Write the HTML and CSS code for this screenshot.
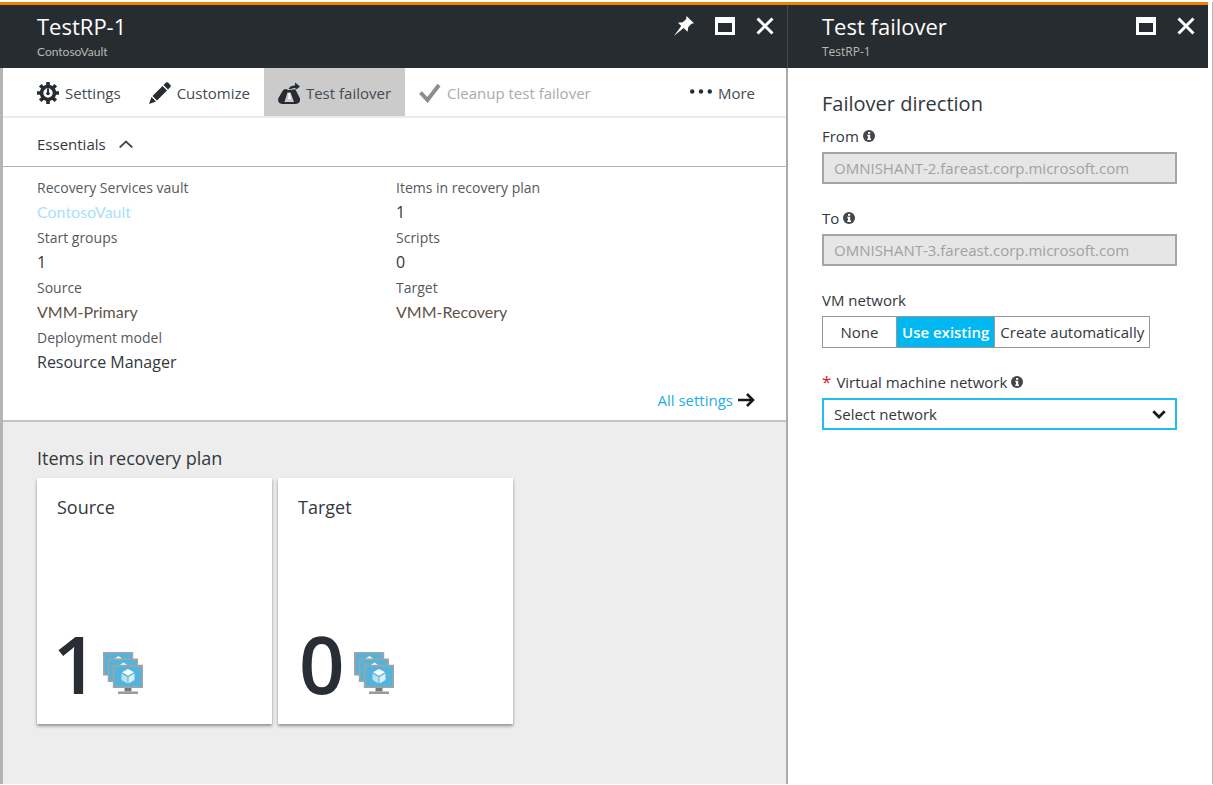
FILE: index.html
```html
<!DOCTYPE html>
<html lang="en">
<head>
<meta charset="utf-8">
<title>TestRP-1 - Test failover</title>
<link rel="stylesheet" href="styles.css">
</head>
<body>
<svg class="defs" aria-hidden="true">
  <symbol id="restore" viewBox="0 0 20 18"><path fill="#fff" fill-rule="evenodd" d="M0 0h20v18H0zM3 6v9h14V6z"/></symbol>
  <symbol id="close" viewBox="0 0 18 18"><path d="M1.500 1.500 16.500 16.500M16.500 1.500 1.500 16.500" stroke="#fff" stroke-width="3" fill="none"/></symbol>
  <symbol id="info" viewBox="0 0 12 12"><circle cx="6" cy="6" r="6" fill="#43474b"/><path d="M5 2h2.200v1.800H5zM4.300 4.800h2.900v3.700h.8V10H4.300V8.500H5V6.200h-.7z" fill="#fff"/></symbol>
  <symbol id="machines" viewBox="0 0 40 42">
    <g fill="#52b3dc" stroke="#a3a3a3" stroke-width="1.600">
      <path d="M.8.800h28.600v22H.8z"/>
      <path d="m11.500 6.800 4-2.800 4 2.800z" fill="#fff" stroke="none"/>
      <path d="M5.600 7.200h28.600v22H5.600z"/>
      <path d="m16.500 13.200 4-2.800 4 2.800z" fill="#fff" stroke="none"/>
      <path d="M10.600 13.600h28.600v21.600H10.600z"/>
    </g>
    <path d="M21.500 36h7v3.500h-7z" fill="#7a7a7a"/><path d="M15 39.500h20V42H15z" fill="#999"/>
    <path d="m25 17 6 3.300-6 3.400-6-3.400z" fill="#fff"/>
    <path d="m18.500 21.500 6 3.400v6.600l-6-3.400z" fill="#b9e1f2"/>
    <path d="m31.500 21.500-6 3.400v6.600l6-3.400z" fill="#d9f0f9"/>
  </symbol>
</svg>
<main class="blades">
  <section class="blade plan">
    <header class="blade-header">
      <div class="blade-titles">
        <h1 class="blade-title">TestRP-1</h1>
        <p class="blade-subtitle alt">ContosoVault</p>
      </div>
      <div class="window-actions">
        <button type="button" aria-label="Pin"><svg width="20" height="20" viewBox="0 0 20 20"><path d="M12.500 0 20 7.200 17.400 7.800 14.200 11.200 13.600 15.800 9.600 12 0 20 7.200 10 4 6.800 8.800 6.200 12.200 3z" fill="#fff"/></svg></button>
        <button type="button" aria-label="Restore"><svg width="20" height="18"><use href="#restore"/></svg></button>
        <button type="button" aria-label="Close"><svg width="18" height="18"><use href="#close"/></svg></button>
      </div>
    </header>
    <nav class="toolbar" aria-label="Commands">
      <button type="button" class="tool">
        <svg width="22" height="22" viewBox="0 0 22 22"><g fill="none" stroke="#272c33"><circle cx="11" cy="11" r="6.500" stroke-width="3.600"/><path d="M11 0v4M11 18v4M0 11h4M18 11h4M3.200 3.200 6 6M16 16l2.800 2.800M18.800 3.200 16 6M6 16l-2.800 2.800" stroke-width="3.600"/><path d="M11 6.500v5" stroke-width="2"/></g><circle cx="11" cy="11.500" r="1.800" fill="#272c33"/></svg>
        Settings</button>
      <button type="button" class="tool">
        <svg width="22" height="22" viewBox="0 0 22 22"><path d="M0 22 2.500 15 7 19.500zM3.500 14 13.500 4 18 8.500 8 18.500zM14.500 3 17 .600Q18-.3 19 .600L21.400 3Q22.300 4 21.400 5L19 7.500z" fill="#272c33"/></svg>
        Customize</button>
      <button type="button" class="tool selected">
        <svg width="22" height="22" viewBox="0 0 22 22"><path d="M4.500 9Q7 5.500 10 8h3.500Q17 6 18.500 9.500L22 16.500Q22.500 22 17 22H4Q-.5 21.500.200 16.500z" fill="#272c33"/><path d="M9.500 10.500h3L16 20H6.500z" fill="#cbcbcb"/><path d="M10.500 11h1.500l.8 6h-2.500z" fill="#fff"/><path d="M10.500 6.500Q13 3 17 3.500V.500L22 4.500 17.500 8V6Q14 5.500 12.500 7.500z" fill="#272c33"/></svg>
        Test failover</button>
      <button type="button" class="tool" disabled>
        <svg width="22" height="20" viewBox="0 0 22 20"><path d="m1.500 9.500 7 7.500L20 2" fill="none" stroke="#8b8e90" stroke-width="4"/></svg>
        Cleanup test failover</button>
      <button type="button" class="tool more">
        <svg width="22" height="22" viewBox="0 0 22 22"><g fill="#272c33"><circle cx="2.200" cy="9.500" r="2.200"/><circle cx="11" cy="9.500" r="2.200"/><circle cx="19.800" cy="9.500" r="2.200"/></g></svg>
        More</button>
    </nav>
    <button type="button" class="essentials-toggle" aria-expanded="true">Essentials
      <svg width="14" height="8" viewBox="0 0 14 8"><path d="m.7 7.500 6.300-6 6.300 6" fill="none" stroke="#44484c" stroke-width="1.800"/></svg>
    </button>
    <div class="essentials">
      <dl class="facts">
        <div><dt>Recovery Services vault</dt><dd class="alt"><a class="vault" href="#vault">ContosoVault</a></dd></div>
        <div><dt>Items in recovery plan</dt><dd>1</dd></div>
        <div><dt>Start groups</dt><dd>1</dd></div>
        <div><dt>Scripts</dt><dd>0</dd></div>
        <div><dt>Source</dt><dd class="alt">VMM-Primary</dd></div>
        <div><dt>Target</dt><dd class="alt">VMM-Recovery</dd></div>
        <div><dt>Deployment model</dt><dd>Resource Manager</dd></div>
      </dl>
      <a class="all-settings" href="#settings">All settings
        <svg width="17" height="14" viewBox="0 0 17 14"><path d="M0 7h15M9 1l6 6-6 6" fill="none" stroke="#171b1f" stroke-width="2.600"/></svg></a>
    </div>
    <section class="items">
      <h2 class="items-title">Items in recovery plan</h2>
      <div class="tiles">
        <article class="tile"><h3>Source</h3><p class="count">1<svg width="40" height="42"><use href="#machines"/></svg></p></article>
        <article class="tile"><h3>Target</h3><p class="count">0<svg width="40" height="42"><use href="#machines"/></svg></p></article>
      </div>
    </section>
  </section>
  <section class="blade failover">
    <header class="blade-header">
      <div class="blade-titles">
        <h1 class="blade-title">Test failover</h1>
        <p class="blade-subtitle">TestRP-1</p>
      </div>
      <div class="window-actions">
        <button type="button" aria-label="Restore"><svg width="20" height="18"><use href="#restore"/></svg></button>
        <button type="button" aria-label="Close"><svg width="18" height="18"><use href="#close"/></svg></button>
      </div>
    </header>
    <form class="form">
      <h2 class="form-title">Failover direction</h2>
      <div class="field">
        <label for="from">From <svg width="12" height="12"><use href="#info"/></svg></label>
        <input class="box" id="from" type="text" value="OMNISHANT-2.fareast.corp.microsoft.com" disabled>
      </div>
      <div class="field">
        <label for="to">To <svg width="12" height="12"><use href="#info"/></svg></label>
        <input class="box" id="to" type="text" value="OMNISHANT-3.fareast.corp.microsoft.com" disabled>
      </div>
      <fieldset class="field">
        <legend>VM network</legend>
        <div class="segments">
          <label><input type="radio" name="network-mode"><span>None</span></label>
          <label><input type="radio" name="network-mode" checked><span>Use existing</span></label>
          <label><input type="radio" name="network-mode"><span>Create automatically</span></label>
        </div>
      </fieldset>
      <div class="field">
        <label for="network"><span class="required">*</span> Virtual machine network <svg width="12" height="12"><use href="#info"/></svg></label>
        <div class="select">
          <select class="box" id="network"><option>Select network</option></select>
          <svg width="14" height="9" viewBox="0 0 14 9"><path d="m1.300 1.300 5.700 5.700 5.700-5.700" fill="none" stroke="#171b1f" stroke-width="2.800"/></svg>
        </div>
      </div>
    </form>
  </section>
</main>
</body>
</html>
```

FILE: styles.css
```css
* { box-sizing: border-box; }
body, h1, h2, h3, p, dl, dd, fieldset { margin: 0; padding: 0; }
body {
  background: #fff;
  color: #33383d;
  font: 15px/24px "Open Sans", "Noto Sans", sans-serif;
}
button, input, select { font: inherit; color: inherit; }
button { border: 0; padding: 0; background: none; cursor: pointer; }
svg { flex: none; display: block; }
h1, h2, h3 { font-weight: 400; }
.defs { position: absolute; width: 0; height: 0; }
.alt { font-family: Lato, "Open Sans", sans-serif; }

.blades {
  display: grid;
  grid-template-columns: 788fr 425fr;
  min-height: 100vh;
  padding: 2px 0 1px;
}
.blade { display: flex; flex-direction: column; min-width: 0; }
.plan { border-left: 3px solid #b4b4b4; border-right: 2px solid #ababab; }
.failover { border-right: 1px solid #b4b4b4; }
.blade-header {
  display: flex;
  justify-content: space-between;
  height: 66px;
  padding: 6px 13px 0 34px;
  background: #272c30;
  border-top: 3px solid #ef8200;
  color: #fff;
}
.plan .blade-header { margin: 0 -2px 0 -3px; padding-left: 37px; padding-right: 14px; box-shadow: inset -1px 0 #45494d; }
.failover .blade-header { margin-right: 4px; }
.blade-title { font-size: 22px; line-height: 30px; }
.blade-subtitle { font-size: 12px; line-height: 22px; color: #b9b9b5; }
.window-actions { display: flex; align-items: center; gap: 21px; height: 30px; }

.toolbar { display: flex; height: 50px; padding: 0 17px 0 20px; border-bottom: 2px solid #ebebeb; }
.tool { display: flex; align-items: center; gap: 6px; padding: 2px 14px 0; color: #444b54; }
.tool.selected { background: #cbcbcb; }
.tool:disabled { color: #a9abad; }
.tool.more { margin-left: auto; }

.essentials-toggle {
  display: flex;
  align-items: center;
  gap: 13px;
  height: 49px;
  padding: 4px 34px 0;
  border-bottom: 1px solid #b4b4b4;
}
.essentials { display: flex; flex-direction: column; padding: 9px 31px 8px 34px; border-bottom: 2px solid #c4c4c4; }
.facts { display: grid; grid-template-columns: 1fr 1fr; row-gap: 2px; }
.facts dt { font-size: 14px; color: #55595d; }
.facts dd { font-size: 16px; }
.facts dd.alt { color: #5e5248; }
.facts .vault { color: #a9e1fa; text-decoration: none; }
.all-settings { display: flex; align-items: center; align-self: flex-end; gap: 5px; margin-top: 14px; color: #1eaee5; text-decoration: none; }

.items { flex: 1; padding: 22px 34px; background: #ededed; }
.items-title { font-size: 18px; line-height: 28px; margin-bottom: 6px; }
.tiles { display: flex; flex-wrap: wrap; gap: 6px; }
.tile {
  display: flex;
  flex-direction: column;
  justify-content: space-between;
  width: 235px;
  height: 246px;
  padding: 16px 20px 19px;
  background: #fff;
  box-shadow: 0 2px 3px #0006;
}
.tile h3 { font-size: 18px; line-height: 26px; }
.count {
  display: flex;
  align-items: baseline;
  gap: 8px;
  font-size: 80px;
  line-height: 84px;
  font-weight: 600;
  font-variant-numeric: proportional-nums;
  color: #292e36;
}

.form { padding: 23px 35px 0 34px; }
.form-title { font-size: 20px; line-height: 26px; margin-bottom: 7px; }
.field { border: 0; margin-bottom: 22px; min-width: 0; }
.field > label, .field > legend { display: flex; align-items: center; gap: 4px; padding: 0; margin-bottom: 4px; }
.required { margin-right: 1px; color: #e81123; font-size: 17px; }
.box {
  display: block;
  width: 100%;
  height: 32px;
  margin: 0;
  padding: 0 11px;
  border: 1px solid #8a8a8a;
  border-radius: 0;
  background: #fff;
}
.box:disabled { background: #e6e6e6; color: #a0a2a4; border-width: 2px; border-color: #a5a5a5; padding: 0 10px; }
.select { display: grid; align-items: center; }
.select > * { grid-area: 1 / 1; }
.select svg { justify-self: end; margin-right: 11px; pointer-events: none; }
.select .box { appearance: none; border: 2px solid #1fbdf0; padding: 0 10px; outline: 0; }
.segments { display: flex; width: fit-content; border: 1px solid #999; }
.segments label { position: relative; display: flex; }
.segments label + label { border-left: 1px solid #999; }
.segments input { position: absolute; inset: 0; margin: 0; opacity: 0; }
.segments span { min-width: 73px; padding: 0 5px; line-height: 30px; text-align: center; }
.segments input:checked + span { background: #00b7f1; color: #fff; font-weight: 600; }
```
